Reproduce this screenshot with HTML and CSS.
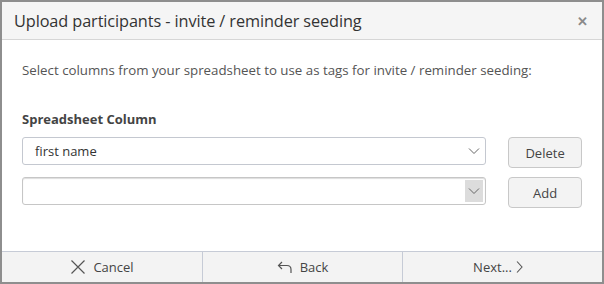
FILE: index.html
```html
<!DOCTYPE html>
<html>
<head>
<meta charset="utf-8">
<link rel="stylesheet" href="styles.css">
</head>
<body>
<div class="dialog">
  <div class="header">
    <div class="title">Upload participants - invite / reminder seeding</div>
    <div class="close">&#x2715;</div>
  </div>
  <div class="body">
    <p class="intro">Select columns from your spreadsheet to use as tags for invite / reminder seeding:</p>
    <div class="label">Spreadsheet Column</div>
    <div class="row">
      <div class="select"><span class="val">first name</span>
        <span class="arrow"><svg width="12" height="8" viewBox="0 0 12 8"><path d="M1 1.5 L6 6.5 L11 1.5" fill="none" stroke="#666" stroke-width="1"/></svg></span>
      </div>
      <button class="btn">Delete</button>
    </div>
    <div class="row">
      <div class="select empty"><span class="val"></span>
        <span class="arrow boxed"><svg width="12" height="8" viewBox="0 0 12 8"><path d="M1 1.5 L6 6.5 L11 1.5" fill="none" stroke="#666" stroke-width="1"/></svg></span>
      </div>
      <button class="btn">Add</button>
    </div>
  </div>
  <div class="footer">
    <div class="fbtn"><svg width="16" height="16" viewBox="0 0 16 16"><path d="M1.5 1.5 L14.5 14.5 M14.5 1.5 L1.5 14.5" stroke="#555" stroke-width="1.2" fill="none"/></svg><span>Cancel</span></div>
    <div class="fbtn"><svg width="16" height="14" viewBox="0 0 16 14"><path d="M5 2 L1.5 5.5 L5 9 M1.5 5.5 H10 Q14 5.5 14 9.5 V13" stroke="#555" stroke-width="1.2" fill="none"/></svg><span>Back</span></div>
    <div class="fbtn next"><span>Next...</span><svg width="7" height="12" viewBox="0 0 7 12"><path d="M1 0.5 L6 6 L1 11.5" stroke="#555" stroke-width="1.1" fill="none"/></svg></div>
  </div>
</div>
</body>
</html>
```
FILE: styles.css
```css
html, body {
  margin: 0;
  padding: 0;
  background: #fff;
}
.dialog {
  width: 600px;
  height: 280px;
  border: 2px solid #8e8e8e;
  display: flex;
  flex-direction: column;
  font-family: "Open Sans", "Noto Sans", sans-serif;
  color: #333;
}
.header {
  height: 37px;
  background: #f5f5f5;
  border-bottom: 1px solid #d6d6d6;
  display: flex;
  align-items: center;
  justify-content: space-between;
  padding: 0 14px 0 12px;
}
.title {
  font-size: 16.3px;
  color: #333;
  letter-spacing: -0.1px;
}
.close {
  font-size: 13px;
  font-weight: bold;
  color: #8a8a8a;
}
.body {
  flex: 1;
  padding: 0 20px;
  font-family: "Open Sans", "Noto Sans", sans-serif;
}
.intro {
  margin: 21px 0 0;
  font-size: 13.3px;
  color: #555;
  line-height: 18px;
}
.label {
  margin-top: 31px;
  font-size: 13px;
  font-weight: bold;
  color: #444;
  line-height: 18px;
}
.row {
  display: flex;
  align-items: flex-start;
  margin-top: 9px;
}
.select {
  height: 26px;
  border: 1px solid #c4c8d0;
  border-radius: 3px;
  display: flex;
  align-items: center;
  justify-content: space-between;
  padding: 0 0 0 12px;
  box-sizing: content-box;
  width: 451px;
}
.select.empty {
  border-color: #c6c6c6;
  box-shadow: inset 0 1px 1px #ddd;
}
.val {
  font-family: "Open Sans", "Noto Sans", sans-serif;
  font-size: 13px;
  color: #333;
}
.arrow {
  width: 18px;
  height: 22px;
  margin-right: 2px;
  display: flex;
  align-items: center;
  justify-content: center;
}
.arrow.boxed {
  background: #dcdcdc;
}
.btn {
  margin-left: 22px;
  width: 74px;
  height: 31px;
  border: 1px solid #c8c8c8;
  border-radius: 4px;
  background: #f3f3f3;
  font-family: "Open Sans", "Noto Sans", sans-serif;
  font-size: 13px;
  color: #444;
  padding: 0;
}
.footer {
  height: 30px;
  border-top: 1px solid #c6cbd6;
  background: #f3f3f3;
  display: grid;
  grid-template-columns: 200px 200px 200px;
}
.fbtn {
  display: flex;
  align-items: center;
  justify-content: center;
  gap: 7px;
  font-size: 13px;
  color: #444;
  border-left: 1px solid #c6cbd6;
}
.fbtn.next {
  gap: 4px;
  padding-right: 9px;
}
.fbtn:first-child {
  border-left: none;
}
```
